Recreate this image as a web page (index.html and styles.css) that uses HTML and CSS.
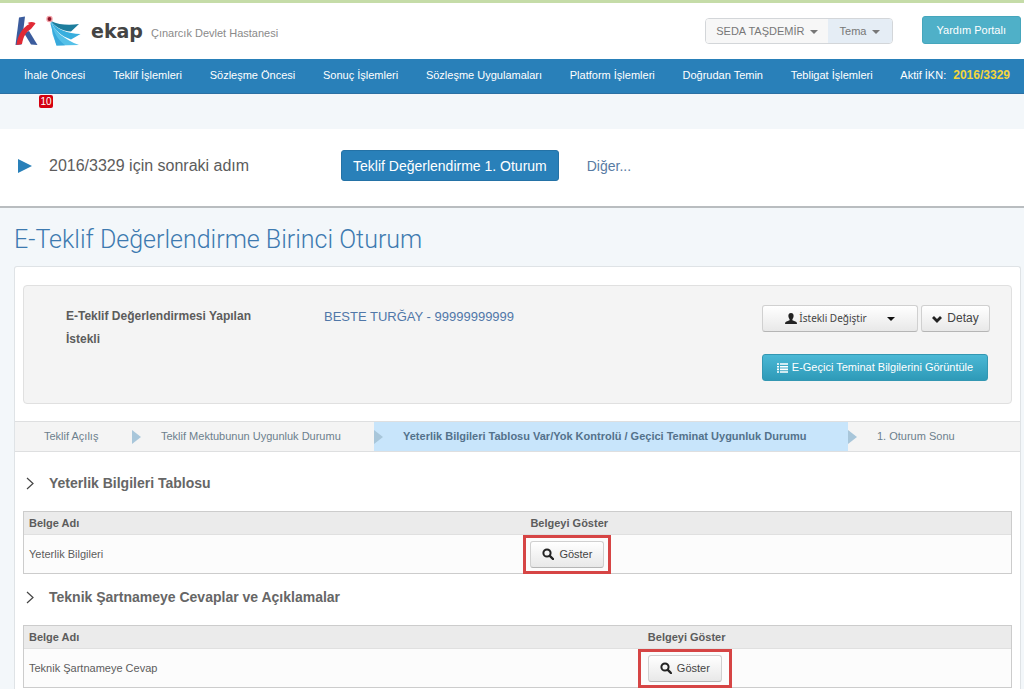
FILE: index.html
```html
<!DOCTYPE html>
<html lang="tr">
<head>
<meta charset="utf-8">
<meta name="viewport" content="width=device-width, initial-scale=1">
<title>E-Teklif Değerlendirme Birinci Oturum</title>
<link rel="stylesheet" href="styles.css">
</head>
<body>
<svg class="sprite" aria-hidden="true">
  <symbol id="search" viewBox="0 0 12 12"><circle cx="5" cy="5" r="3.6" fill="none" stroke="#222" stroke-width="2"/><path d="M7.8 7.8 11 11" stroke="#222" stroke-width="2.4" stroke-linecap="round"/></symbol>
  <symbol id="chevron" viewBox="0 0 9 14"><path d="M2 2l6 5.500-6 5.500" fill="none" stroke="#444" stroke-width="1.200"/></symbol>
</svg>

<header class="header">
  <a class="brand" href="#" aria-label="ekap">
    <svg class="logo" width="70" height="34" viewBox="0 0 70 34">
      <path d="M4 3.500 10 2.500 6.500 30.500 0.500 31z" fill="#3b5c9d"/>
      <path d="M9 19 14 17 22.500 31 16 30.500z" fill="#3b5c9d"/>
      <path d="M1.500 31C2.500 21 8 13 14.500 10L12.500 9C16 7 20 8 20.500 9.500L16 15C11 18 8.500 22 7 30z" fill="#e02a35"/>
      <path d="M36 7C44 11 54 11.500 64 10L56 17.500C47 17 40 13 36 7z" fill="#1d7d9d"/>
      <path d="M36 7C41 15 53 20 65.500 20L56 25.500C46 22 39 16 36 7z" fill="#38aede"/>
      <path d="M36 7C39 17 50 26 64 31L41.500 31.500 37.500 20z" fill="#54c0e8"/>
      <path d="M36 7 35.500 10 41.500 31.500 50 31.300C42 25 38 17 36 7z" fill="#39a9dc"/>
      <circle cx="34.500" cy="5" r="3.200" fill="#f3a0a6"/><circle cx="34.500" cy="5" r="1.900" fill="#8e1528"/>
    </svg>
    <span class="brand-name">ekap</span>
  </a>
  <span class="institution">Çınarcık Devlet Hastanesi</span>
  <div class="user-menu">
    <button class="user-btn" type="button">SEDA TAŞDEMİR <i class="caret"></i></button>
    <button class="user-btn theme-btn" type="button">Tema <i class="caret"></i></button>
  </div>
  <button class="help-btn" type="button">Yardım Portalı</button>
</header>

<nav class="nav">
  <a href="#">İhale Öncesi</a>
  <a href="#">Teklif İşlemleri</a>
  <a href="#">Sözleşme Öncesi</a>
  <a href="#">Sonuç İşlemleri</a>
  <a href="#">Sözleşme Uygulamaları</a>
  <a href="#">Platform İşlemleri</a>
  <a href="#">Doğrudan Temin</a>
  <a href="#">Tebligat İşlemleri</a>
  <a href="#">Aktif İKN: <strong>2016/3329</strong></a>
</nav>

<div class="notices"><a class="count" href="#">10</a></div>

<section class="next-step">
  <svg class="play" width="14" height="14" viewBox="0 0 14 14"><path d="M0 0 14 7 0 14z" fill="#2980b9"/></svg>
  <span class="next-label">2016/3329 için sonraki adım</span>
  <button class="step-btn" type="button">Teklif Değerlendirme 1. Oturum</button>
  <a class="other" href="#">Diğer...</a>
</section>

<main class="main">
  <h1 class="title">E-Teklif Değerlendirme Birinci Oturum</h1>
  <div class="card">
    <section class="well">
      <div class="bidder-label">E-Teklif Değerlendirmesi Yapılan İstekli</div>
      <a class="bidder" href="#">BESTE TURĞAY - 99999999999</a>
      <div class="actions">
        <div class="action-row">
          <button class="btn change-btn" type="button">
            <svg width="12" height="11" viewBox="0 0 12 11"><path d="M6 0C8 0 8.800 1.300 8.600 3.200 8.500 4.700 7.800 5.600 7.400 6.200V7.200L11 8.700Q12 9.200 12 11H0Q0 9.200 1 8.700L4.600 7.200V6.200C4.200 5.600 3.500 4.700 3.400 3.200 3.200 1.300 4 0 6 0z" fill="#222"/></svg>
            <span>İstekli Değiştir</span><i class="caret caret-dark"></i>
          </button>
          <button class="btn detail-btn" type="button">
            <svg width="10" height="8" viewBox="0 0 10 8"><path d="M1 2 5 6 9 2" fill="none" stroke="#222" stroke-width="2.800"/></svg>
            <span>Detay</span>
          </button>
        </div>
        <button class="btn info-btn" type="button">
          <svg width="11" height="10" viewBox="0 0 11 10"><path d="M0 1H2M3 1H11M0 3.700H2M3 3.700H11M0 6.400H2M3 6.400H11M0 9H2M3 9H11" stroke="#fff" stroke-width="1.600"/></svg>
          <span>E-Geçici Teminat Bilgilerini Görüntüle</span>
        </button>
      </div>
    </section>

    <nav class="steps">
      <a href="#">Teklif Açılış</a>
      <a href="#">Teklif Mektubunun Uygunluk Durumu</a>
      <a class="active" href="#" aria-current="step">Yeterlik Bilgileri Tablosu Var/Yok Kontrolü / Geçici Teminat Uygunluk Durumu</a>
      <a href="#">1. Oturum Sonu</a>
    </nav>

    <section class="section">
      <h2 class="section-title"><svg width="9" height="14"><use href="#chevron"/></svg>Yeterlik Bilgileri Tablosu</h2>
      <table class="docs docs-a">
        <thead><tr><th scope="col">Belge Adı</th><th scope="col">Belgeyi Göster</th></tr></thead>
        <tbody><tr><td>Yeterlik Bilgileri</td><td><span class="marked"><button class="btn show-btn" type="button"><svg width="12" height="12"><use href="#search"/></svg><span>Göster</span></button></span></td></tr></tbody>
      </table>
    </section>

    <section class="section">
      <h2 class="section-title"><svg width="9" height="14"><use href="#chevron"/></svg>Teknik Şartnameye Cevaplar ve Açıklamalar</h2>
      <table class="docs docs-b">
        <thead><tr><th scope="col">Belge Adı</th><th scope="col">Belgeyi Göster</th></tr></thead>
        <tbody><tr><td>Teknik Şartnameye Cevap</td><td><span class="marked marked-wide"><button class="btn show-btn" type="button"><svg width="12" height="12"><use href="#search"/></svg><span>Göster</span></button></span></td></tr></tbody>
      </table>
    </section>
  </div>
</main>
</body>
</html>
```
FILE: styles.css
```css
* { box-sizing: border-box; }

body {
  margin: 0;
  min-height: 100vh;
  display: flex;
  flex-direction: column;
  background: #f3f7fa;
  color: #5c5c5c;
  font: 11px/16px "Liberation Sans", Arial, sans-serif;
}

a { color: inherit; text-decoration: none; }
button { font: inherit; cursor: pointer; }
svg { flex: none; }
.sprite { position: absolute; width: 0; height: 0; }

.caret {
  display: inline-block;
  border: 4px solid transparent;
  border-top-color: currentColor;
  border-bottom: 0;
  margin-left: 2px;
  vertical-align: middle;
}

/* Header */
.header {
  display: flex;
  align-items: center;
  height: 59px;
  padding: 0 3px 0 15px;
  border-top: 3px solid #c5dca8;
  background: #fff;
}
.brand { display: flex; align-items: center; gap: 6px; }
.brand-name {
  color: #444;
  font: bold 19px/24px "DejaVu Sans", sans-serif;
}
.institution { margin-left: 8px; padding-top: 4px; color: #8a8a8a; }
.user-menu {
  display: flex;
  margin-left: auto;
  border: 1px solid #d3d6d9;
  border-radius: 4px;
  overflow: hidden;
}
.user-btn {
  height: 24px;
  padding: 0 10px;
  border: 0;
  background: #f7f7f7;
  color: #777;
}
.theme-btn { padding: 0 12px; background: #e5edf5; }
.help-btn {
  height: 28px;
  margin: 0 0 3px 29px;
  padding: 0 14px;
  border: 1px solid #45a6bc;
  border-radius: 3px;
  background: #4fb0c8;
  color: #fff;
}

/* Main menu */
.nav {
  display: flex;
  justify-content: space-between;
  align-items: center;
  height: 35px;
  padding: 0 14px 2px 24px;
  border-bottom: 1px solid #2b70a3;
  background: #2980b9;
  color: #fff;
  white-space: nowrap;
}
.nav strong { margin-left: 4px; color: #f3d53c; font-size: 12px; }

.notices { height: 35px; padding: 1px 39px; }
.count {
  display: block;
  width: 14px;
  border-radius: 2px;
  background: #d4000f;
  color: #fff;
  font-size: 10px;
  line-height: 13px;
  text-align: center;
}

/* Next step */
.next-step {
  display: flex;
  align-items: center;
  height: 79px;
  padding: 0 18px 4px;
  border-bottom: 2px solid #b9bdc0;
  background: #fff;
  font-size: 14px;
}
.next-label { width: 292px; margin-left: 17px; font-size: 16px; }
.step-btn {
  height: 31px;
  padding: 0 11px;
  border: 1px solid #2472a6;
  border-radius: 3px;
  background: #2980b9;
  color: #fff;
}
.other { margin-left: 28px; color: #587ba3; }

/* Content */
.main {
  flex: 1;
  display: flex;
  flex-direction: column;
  padding: 15px 3px 0 14px;
}
.title {
  margin: 0 0 9px;
  color: #3d7ab0;
  font: 300 25px/34px Roboto, sans-serif;
}
.card {
  flex: 1;
  border: 1px solid #dfe3e6;
  border-bottom: 0;
  border-radius: 3px 3px 0 0;
  background: #fff;
}
.well {
  display: flex;
  height: 119px;
  margin: 18px 8px 17px;
  padding: 19px 21px 0 42px;
  border: 1px solid #e0e0e0;
  border-radius: 4px;
  background: #f4f4f4;
  font-size: 13px;
  line-height: 23px;
}
.bidder-label { width: 220px; font-size: 12px; font-weight: bold; }
.bidder { flex: 1; margin-left: 38px; color: #5077a8; }
.actions { width: 228px; font-size: 11px; }
.action-row { display: flex; gap: 3px; margin-bottom: 22px; }

.btn {
  display: flex;
  align-items: center;
  justify-content: center;
  gap: 5px;
  height: 27px;
  padding: 0;
  border: 1px solid #d0d0d0;
  border-bottom-color: #b5b5b5;
  border-radius: 3px;
  background: linear-gradient(#fff, #e8e8e8);
  color: #444;
  white-space: nowrap;
}
.change-btn { flex: 1; gap: 2px; font-family: "Noto Sans", sans-serif; font-size: 10px; }
.caret-dark { margin-left: 18px; color: #111; }
.detail-btn { width: 69px; font-size: 12px; }
.info-btn {
  width: 226px;
  gap: 4px;
  border-color: #3397b2;
  background: linear-gradient(#4bb8d5, #2e9ab8);
  color: #fff;
}

/* Wizard steps */
.steps {
  display: grid;
  grid-template-columns: 117fr 242fr 474fr 172fr;
  height: 31px;
  border: solid #dedfe0;
  border-width: 1px 0;
  background: #f4f4f4;
  color: #6c7f8d;
  line-height: 29px;
  white-space: nowrap;
}
.steps a { position: relative; padding-left: 29px; }
.steps a + a::before {
  content: "";
  position: absolute;
  left: 0;
  top: 8px;
  border: 7px solid transparent;
  border-left: 9px solid #a8c6da;
  border-right: 0;
}
.steps .active { background: #c8e5fb; color: #54728b; font-weight: bold; }

/* Document tables */
.section { padding: 20px 8px 0; }
.section + .section { padding-top: 12px; }
.section-title {
  display: flex;
  align-items: center;
  gap: 15px;
  margin: 0 0 17px 2px;
  color: #666;
  font-size: 14px;
  line-height: 22px;
}
.docs {
  width: 100%;
  table-layout: fixed;
  border: 1px solid #ccc;
  border-spacing: 0;
}
.docs th, .docs td { padding: 0 5px; text-align: left; }
.docs th { height: 23px; border-bottom: 1px solid #e0e0e0; background: #ebebeb; }
.docs td { height: 38px; background: #fcfcfc; }
.docs-a th:first-child { width: 50.8%; }
.docs-b th:first-child { width: 62.7%; }
.show-btn { width: 74px; }
.marked { display: inline-block; position: relative; vertical-align: middle; }
.marked::after {
  content: "";
  position: absolute;
  inset: -6px -7px;
  border: 3px solid #d64545;
  pointer-events: none;
}
.marked-wide::after { inset: -6px -10px; }
```
